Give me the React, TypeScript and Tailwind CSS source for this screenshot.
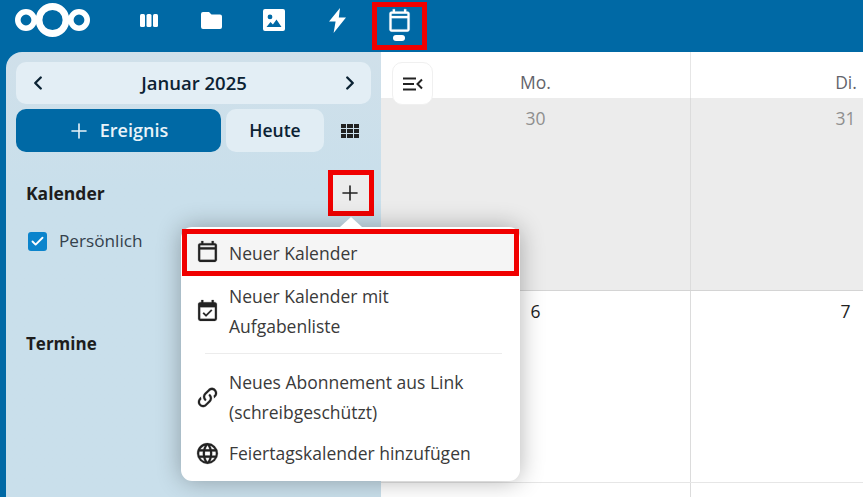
import { Check, ChevronLeft, ChevronRight, Plus } from "lucide-react";

const font = { fontFamily: '"Open Sans", "Noto Sans", sans-serif' };

const MDI = {
  calendar:
    "M19 3H18V1H16V3H8V1H6V3H5C3.89 3 3 3.89 3 5V19C3 20.1 3.89 21 5 21H19C20.1 21 21 20.1 21 19V5C21 3.89 20.1 3 19 3M19 19H5V9H19V19M19 7H5V5H19V7Z",
  calendarCheck:
    "M19 19H5V8H19M19 3H18V1H16V3H8V1H6V3H5C3.89 3 3 3.9 3 5V19A2 2 0 0 0 5 21H19A2 2 0 0 0 21 19V5C21 3.89 20.1 3 19 3M16.53 11.06L15.47 10L10.59 14.88L8.47 12.76L7.41 13.82L10.59 17L16.53 11.06Z",
  link: "M10.59,13.41C11,13.8 11,14.44 10.59,14.83C10.2,15.22 9.56,15.22 9.17,14.83C7.22,12.88 7.22,9.71 9.17,7.76V7.76L12.71,4.22C14.66,2.27 17.83,2.27 19.78,4.22C21.73,6.17 21.73,9.34 19.78,11.29L18.29,12.78C18.3,11.96 18.17,11.14 17.89,10.36L18.36,9.88C19.54,8.71 19.54,6.81 18.36,5.64C17.19,4.46 15.29,4.46 14.12,5.64L10.59,9.17C9.41,10.34 9.41,12.24 10.59,13.41M13.41,9.17C13.8,8.78 14.44,8.78 14.83,9.17C16.78,11.12 16.78,14.29 14.83,16.24V16.24L11.29,19.78C9.34,21.73 6.17,21.73 4.22,19.78C2.27,17.83 2.27,14.66 4.22,12.71L5.71,11.22C5.7,12.04 5.83,12.86 6.11,13.65L5.64,14.12C4.46,15.29 4.46,17.19 5.64,18.36C6.81,19.54 8.71,19.54 9.88,18.36L13.41,14.83C14.59,13.66 14.59,11.76 13.41,10.59C13,10.2 13,9.56 13.41,9.17Z",
  web: "M16.36,14C16.44,13.34 16.5,12.68 16.5,12C16.5,11.32 16.44,10.66 16.36,10H19.74C19.9,10.64 20,11.31 20,12C20,12.69 19.9,13.36 19.74,14M14.59,19.56C15.19,18.45 15.65,17.25 15.97,16H18.92C17.96,17.65 16.43,18.93 14.59,19.56M14.34,14H9.66C9.56,13.34 9.5,12.68 9.5,12C9.5,11.32 9.56,10.65 9.66,10H14.34C14.43,10.65 14.5,11.32 14.5,12C14.5,12.68 14.43,13.34 14.34,14M12,19.96C11.17,18.76 10.5,17.43 10.09,16H13.91C13.5,17.43 12.83,18.76 12,19.96M8,8H5.08C6.03,6.34 7.57,5.06 9.4,4.44C8.8,5.55 8.35,6.75 8,8M5.08,16H8C8.35,17.25 8.8,18.45 9.4,19.56C7.57,18.93 6.03,17.65 5.08,16M4.26,14C4.1,13.36 4,12.69 4,12C4,11.31 4.1,10.64 4.26,10H7.64C7.56,10.66 7.5,11.32 7.5,12C7.5,12.68 7.56,13.34 7.64,14M12,4.03C12.83,5.23 13.5,6.57 13.91,8H10.09C10.5,6.57 11.17,5.23 12,4.03M18.92,8H15.97C15.65,6.75 15.19,5.55 14.59,4.44C16.43,5.07 17.96,6.34 18.92,8M12,2C6.47,2 2,6.5 2,12A10,10 0 0,0 12,22A10,10 0 0,0 22,12A10,10 0 0,0 12,2Z",
};

const Icon = ({ d, className }: { d: string; className: string }) => (
  <svg viewBox="0 0 24 24" className={className} fill="currentColor" stroke="currentColor" strokeWidth="0.2">
    <path d={d} />
  </svg>
);

const Logo = () => (
  <svg viewBox="0 0 76 36" className="h-[36px] w-[76px]" fill="none" stroke="white">
    <circle cx="11" cy="18" r="8.2" strokeWidth="5.6" />
    <circle cx="37.5" cy="18" r="13.5" strokeWidth="6.8" />
    <circle cx="64" cy="18" r="8.2" strokeWidth="5.6" />
  </svg>
);

const NavApps = () => (
  <nav className="flex h-[40px] items-center text-white">
    <div className="flex w-[62px] justify-center">
      <svg viewBox="0 0 18 13" className="h-[13px] w-[18px]" fill="currentColor">
        <rect x="0" y="0" width="5" height="13" rx="1.5" />
        <rect x="6.5" y="0" width="5" height="13" rx="1.5" />
        <rect x="13" y="0" width="5" height="13" rx="1.5" />
      </svg>
    </div>
    <div className="flex w-[63px] justify-center">
      <svg viewBox="0 0 21 17" className="h-[17px] w-[21px]" fill="currentColor">
        <path d="M2 0h6l2.5 2.5H19a2 2 0 0 1 2 2V15a2 2 0 0 1-2 2H2a2 2 0 0 1-2-2V2a2 2 0 0 1 2-2Z" />
      </svg>
    </div>
    <div className="flex w-[62px] justify-center">
      <svg viewBox="0 0 22 22" className="h-[22px] w-[22px]" fill="currentColor">
        <path
          fillRule="evenodd"
          d="M2 0h18a2 2 0 0 1 2 2v18a2 2 0 0 1-2 2H2a2 2 0 0 1-2-2V2a2 2 0 0 1 2-2Zm5 5.5a2.4 2.4 0 1 0 0 4.8 2.4 2.4 0 0 0 0-4.8ZM3.5 18h15l-5-7.5-3.6 5-2.4-2.6L3.5 18Z"
        />
      </svg>
    </div>
    <div className="flex w-[63px] justify-center">
      <svg viewBox="0 0 18 25" className="h-[25px] w-[18px]" fill="currentColor">
        <path d="M12 0 1 13.5h6.6L5.6 25 18 9.6h-7.2L12 0Z" />
      </svg>
    </div>
    <div className="relative flex h-[41px] w-[62px] flex-col items-center self-start pt-[8px]">
      <Icon d={MDI.calendar} className="h-[27px] w-[27px]" />
      <div className="h-[6px] w-[12px] rounded-full bg-white" />
      <div className="absolute left-[4px] top-[2px] h-[48px] w-[55px] border-[5px] border-[#f00000]" />
    </div>
  </nav>
);

const MenuItem = ({ d, children, box }: { d: string; children: React.ReactNode; box?: boolean }) => (
  <div
    className={
      box
        ? "mx-[1px] flex h-[47px] items-center gap-[9px] border-[5px] border-[#f00000] bg-[#f5f5f5] pl-[8px]"
        : "flex items-center gap-[9px] px-[14px]"
    }
  >
    <Icon d={d} className="h-[25px] w-[25px] shrink-0 text-[#222]" />
    <span className="text-[17.5px] leading-[30px] text-[#3a3a3a]">{children}</span>
  </div>
);

const DayCell = ({ n, muted }: { n: string; muted?: boolean }) => (
  <div className="flex w-[310px] shrink-0 justify-center border-r border-[#dcdcdc] pt-[8px]">
    <span className={`text-[17.5px] leading-[24px] ${muted ? "text-[#8f8f8f]" : "text-[#222]"}`}>{n}</span>
  </div>
);

export default function App() {
  return (
    <div className="relative h-[497px] w-[863px] overflow-hidden bg-[#0069a5]" style={font}>
      <header className="flex h-[52px] items-start">
        <div className="ml-[15px] w-[103px] pt-[2px]">
          <Logo />
        </div>
        <NavApps />
      </header>

      <div className="flex h-[445px]">
        <aside className="ml-[6px] w-[375px] shrink-0 rounded-tl-[16px] bg-gradient-to-b from-[#d0e0ea] to-[#c9dfeb] to-30% px-[10px] pt-[10px]">
          <div className="flex h-[42px] items-center justify-between rounded-[10px] bg-[#e3eef5] pl-[11px] pr-[10px] text-[#0b2233]">
            <ChevronLeft className="h-[22px] w-[22px]" strokeWidth={2.6} />
            <span className="text-[18.5px] font-semibold">Januar 2025</span>
            <ChevronRight className="h-[22px] w-[22px]" strokeWidth={2.6} />
          </div>

          <div className="mt-[5px] flex h-[43px] items-center gap-[5px]">
            <button className="flex h-full w-[205px] items-center justify-center gap-[9px] rounded-[10px] bg-[#0069a5] pr-[2px] text-[18px] font-semibold text-[#e9f3f9]">
              <Plus className="h-[24px] w-[24px]" strokeWidth={1.6} />
              Ereignis
            </button>
            <button className="h-full w-[98px] rounded-[10px] bg-[#e1edf4] text-[17.5px] font-semibold text-[#0b2233]">
              Heute
            </button>
            <div className="ml-[12px] grid h-[14px] w-[18px] grid-cols-3 gap-[1px]">
              {[0, 1, 2, 3, 4, 5, 6, 7, 8].map((i) => (
                <div key={i} className="bg-[#222]" />
              ))}
            </div>
          </div>

          <div className="mt-[18px] flex h-[46px] items-center justify-between pl-[10px]">
            <span className="text-[17.5px] font-bold text-[#1d1d1d]">Kalender</span>
            <div className="-mr-[3px] flex h-[46px] w-[46px] items-center justify-center border-[5px] border-[#f00000] bg-[#ececec] pr-[2px]">
              <Plus className="h-[24px] w-[24px] text-[#222]" strokeWidth={1.6} />
            </div>
          </div>

          <div className="mt-[10px] flex items-center gap-[12px] pl-[12px]">
            <div className="flex h-[19px] w-[19px] items-center justify-center rounded-[3px] bg-[#0b84cc]">
              <Check className="h-[15px] w-[15px] text-white" strokeWidth={3} />
            </div>
            <span className="text-[17.2px] leading-[30px] text-[#34414c]">Persönlich</span>
          </div>

          <div className="mt-[75px] pl-[10px] text-[17px] font-bold text-[#1d1d1d]">Termine</div>
        </aside>

        <main className="relative flex-1 overflow-hidden bg-white">
          <div className="flex h-[46px] text-[17.5px] text-[#63636b]">
            <div className="flex w-[310px] shrink-0 items-center justify-center border-r border-[#e6e6e6] pt-[15px]">Mo.</div>
            <div className="flex w-[310px] shrink-0 items-center justify-center pt-[15px]">Di.</div>
          </div>
          <div className="flex h-[193px] border-b border-[#d4d4d4] bg-[#ececec]">
            <DayCell n="30" muted />
            <DayCell n="31" muted />
          </div>
          <div className="flex h-[192px] border-b border-[#e6e6e6]">
            <DayCell n="6" />
            <DayCell n="7" />
          </div>
          <div className="flex h-[60px]">
            <DayCell n="13" />
            <DayCell n="14" />
          </div>

          <button className="absolute left-[11px] top-[10px] flex h-[43px] w-[41px] items-center justify-center rounded-[10px] border border-[#f0f0f0] bg-white text-[#222]">
            <svg viewBox="0 0 20 14" className="h-[14px] w-[20px]" fill="none" stroke="currentColor" strokeWidth="2">
              <path d="M0 1.5h13M0 7h11M0 12.5h13M19 2.5 14.5 7l4.5 4.5" />
            </svg>
          </button>
        </main>
      </div>

      <div className="absolute left-[181px] top-[227px] w-[339px] rounded-[11px] bg-white py-[2px] shadow-[0_0_24px_rgba(0,0,0,0.3)]">
        <div className="absolute -top-[10px] left-[159px] h-0 w-0 border-x-[11px] border-b-[10px] border-x-transparent border-b-white" />
        <div className="relative">
          <MenuItem d={MDI.calendar} box>Neuer Kalender</MenuItem>
          <div className="mt-[5px]">
            <MenuItem d={MDI.calendarCheck}>
              Neuer Kalender mit
              <br />
              Aufgabenliste
            </MenuItem>
          </div>
          <div className="mb-[13px] ml-[24px] mr-[18px] mt-[12px] h-[1px] bg-[#ececec]" />
          <MenuItem d={MDI.link}>
            Neues Abonnement aus Link
            <br />
            (schreibgeschützt)
          </MenuItem>
          <div className="mt-[11px] pb-[11px]">
            <MenuItem d={MDI.web}>Feiertagskalender hinzufügen</MenuItem>
          </div>
        </div>
      </div>
    </div>
  );
}
